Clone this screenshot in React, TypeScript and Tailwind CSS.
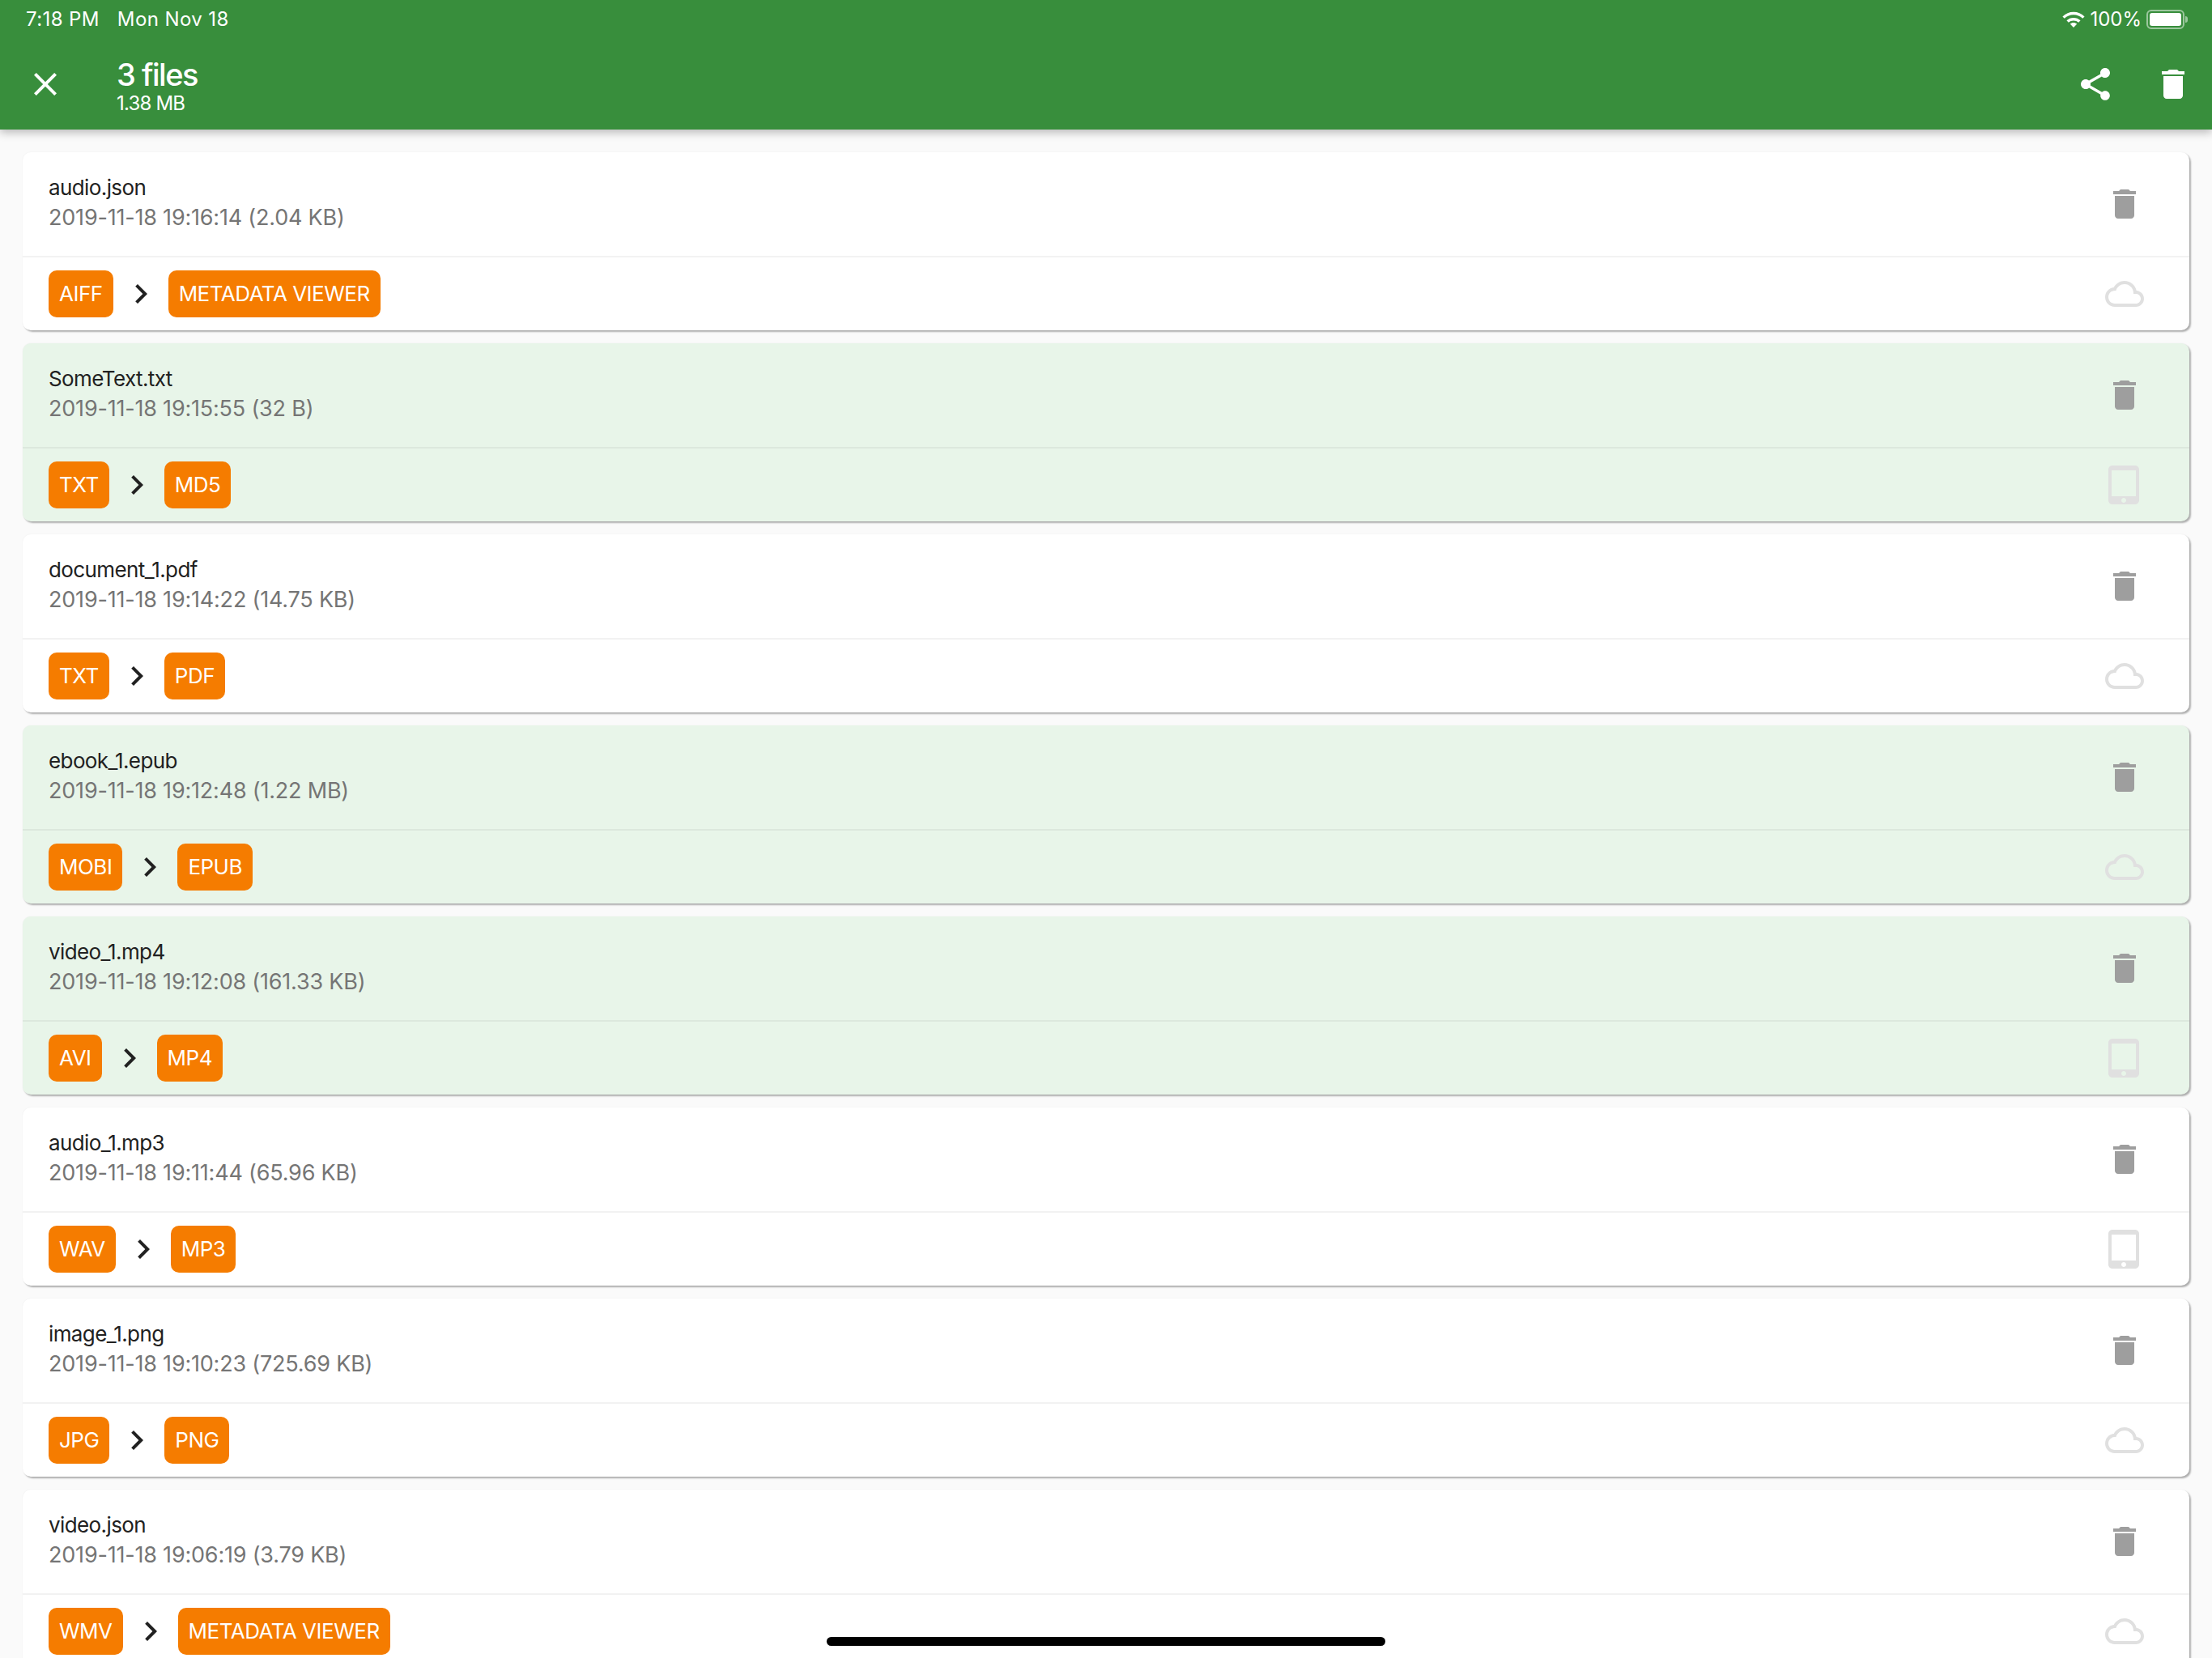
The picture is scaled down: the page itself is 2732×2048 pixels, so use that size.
const font = { fontFamily: 'Inter, "Noto Sans", sans-serif' };

const P = {
  trash: "M6 19c0 1.1.9 2 2 2h8c1.1 0 2-.9 2-2V7H6v12zM19 4h-3.5l-1-1h-5l-1 1H5v2h14V4z",
  share: "M18 16.08c-.76 0-1.44.3-1.96.77L8.91 12.7c.05-.23.09-.46.09-.7s-.04-.47-.09-.7l7.05-4.11c.54.5 1.25.81 2.04.81 1.66 0 3-1.34 3-3s-1.34-3-3-3-3 1.34-3 3c0 .24.04.47.09.7L8.04 9.81C7.5 9.31 6.79 9 6 9c-1.66 0-3 1.34-3 3s1.34 3 3 3c.79 0 1.5-.31 2.04-.81l7.12 4.16c-.05.21-.08.43-.08.65 0 1.61 1.31 2.92 2.92 2.92 1.61 0 2.92-1.31 2.92-2.92s-1.31-2.92-2.92-2.92z",
  close: "M19 6.41L17.59 5 12 10.59 6.41 5 5 6.41 10.59 12 5 17.59 6.41 19 12 13.41 17.59 19 19 17.59 13.41 12z",
  chevron: "M8.59 16.59L13.17 12 8.59 7.41 10 6l6 6-6 6-1.41-1.41z",
  cloud: "M19.35 10.04C18.67 6.59 15.64 4 12 4 9.11 4 6.6 5.64 5.35 8.04 2.34 8.36 0 10.91 0 14c0 3.31 2.69 6 6 6h13c2.76 0 5-2.24 5-5 0-2.64-2.05-4.78-4.65-4.96zM19 18H6c-2.21 0-4-1.79-4-4s1.79-4 4-4h.71C7.37 7.69 9.48 6 12 6c3.04 0 5.5 2.46 5.5 5.5v.5H19c1.66 0 3 1.34 3 3s-1.34 3-3 3z",
  tablet: "M18.5 0h-14C3.12 0 2 1.12 2 2.5v19C2 22.88 3.12 24 4.5 24h14c1.38 0 2.5-1.12 2.5-2.5v-19C21 1.12 19.88 0 18.5 0zm-7 23c-.83 0-1.5-.67-1.5-1.5s.67-1.5 1.5-1.5 1.5.67 1.5 1.5-.67 1.5-1.5 1.5zm7.5-4H4V3h15v16z",
};

function Icon({ d, className }: { d: string; className?: string }) {
  return (
    <svg viewBox="0 0 24 24" className={className} fill="currentColor">
      <path d={d} />
    </svg>
  );
}

const rows = [
  { name: "audio.json", meta: "2019-11-18 19:16:14 (2.04 KB)", from: "AIFF", to: "METADATA VIEWER", icon: P.cloud, green: false },
  { name: "SomeText.txt", meta: "2019-11-18 19:15:55 (32 B)", from: "TXT", to: "MD5", icon: P.tablet, green: true },
  { name: "document_1.pdf", meta: "2019-11-18 19:14:22 (14.75 KB)", from: "TXT", to: "PDF", icon: P.cloud, green: false },
  { name: "ebook_1.epub", meta: "2019-11-18 19:12:48 (1.22 MB)", from: "MOBI", to: "EPUB", icon: P.cloud, green: true },
  { name: "video_1.mp4", meta: "2019-11-18 19:12:08 (161.33 KB)", from: "AVI", to: "MP4", icon: P.tablet, green: true },
  { name: "audio_1.mp3", meta: "2019-11-18 19:11:44 (65.96 KB)", from: "WAV", to: "MP3", icon: P.tablet, green: false },
  { name: "image_1.png", meta: "2019-11-18 19:10:23 (725.69 KB)", from: "JPG", to: "PNG", icon: P.cloud, green: false },
  { name: "video.json", meta: "2019-11-18 19:06:19 (3.79 KB)", from: "WMV", to: "METADATA VIEWER", icon: P.cloud, green: false },
];

function Pill({ text }: { text: string }) {
  return (
    <span className="flex h-[58px] items-center rounded-[10px] bg-[#f57c00] px-[13px] pb-[2px] text-[26px] tracking-[-0.5px] text-white">
      {text}
    </span>
  );
}

export default function App() {
  return (
    <div className="relative h-[2048px] w-[2732px] overflow-hidden bg-[#fafafa]" style={font}>
      <header className="relative z-10 h-[160px] bg-[#388e3c] text-white shadow-[0_4px_10px_rgba(0,0,0,0.25)]">
        <div className="flex h-[48px] items-center justify-between pl-8 pr-[30px] text-[24px]">
          <div className="flex gap-[22px] tracking-[0.4px]">
            <span>7:18 PM</span>
            <span>Mon Nov 18</span>
          </div>
          <div className="flex items-center gap-[6px]">
            <svg viewBox="0 0 28 20" className="h-[20px] w-[28px]" fill="none" stroke="white" strokeWidth="3.4">
              <path d="M1.6 7.6C8.600 0.800 19.400 0.800 26.400 7.600" />
              <path d="M6.600 12.600C10.700 8.700 17.300 8.700 21.400 12.600" />
              <path d="M14 20l-4.300-4.400C12.100 13.400 15.900 13.400 18.300 15.600z" fill="white" stroke="none" />
            </svg>
            <span>100%</span>
            <div className="flex items-center gap-[1px]">
              <div className="flex h-[24px] w-[47px] items-center rounded-[6px] border-2 border-white/50 p-[2px]">
                <div className="h-full w-full rounded-[3px] bg-white" />
              </div>
              <div className="h-[8px] w-[3px] rounded-r-full bg-white/50" />
            </div>
          </div>
        </div>
        <div className="flex h-[112px] items-center pl-8 pr-6">
          <Icon d={P.close} className="h-[48px] w-[48px]" />
          <div className="ml-[64px] flex flex-col pt-[3px]">
            <span className="text-[38px] leading-[44px] font-medium tracking-[-1.5px]">3 files</span>
            <span className="text-[24px] leading-[28px] tracking-[-0.8px]">1.38 MB</span>
          </div>
          <div className="ml-auto flex gap-[48px]">
            <Icon d={P.share} className="h-[48px] w-[48px]" />
            <Icon d={P.trash} className="h-[48px] w-[48px]" />
          </div>
        </div>
      </header>
      <main className="flex flex-col gap-4 px-7 pt-7">
        {rows.map((r) => (
          <section
            key={r.name}
            className={`h-[220px] shrink-0 rounded-[10px] shadow-[2px_2px_2px_rgba(0,0,0,0.3),0_0_2px_rgba(0,0,0,0.06)] ${r.green ? "bg-[#e8f5e9]" : "bg-white"}`}
          >
            <div className="flex h-[130px] items-center justify-between border-b-2 border-black/5 pr-[56px] pl-8">
              <div className="-mt-[3px] flex flex-col">
                <span className="text-[26px] leading-[37px] tracking-[-0.6px] text-[#212121]">{r.name}</span>
                <span className="text-[27px] leading-[38px] tracking-[-0.2px] text-[#757575]">{r.meta}</span>
              </div>
              <Icon d={P.trash} className="h-[48px] w-[48px] text-[#9e9e9e]" />
            </div>
            <div className="flex h-[90px] items-center pr-[56px] pl-8">
              <Pill text={r.from} />
              <Icon d={P.chevron} className="mx-[10px] h-[48px] w-[48px] text-[#212121]" />
              <Pill text={r.to} />
              <Icon d={r.icon} className="ml-auto h-[48px] w-[48px] text-[#e0e0e0]" />
            </div>
          </section>
        ))}
      </main>
      <div className="absolute top-[2022px] left-[1021px] h-[11px] w-[690px] rounded-full bg-black" />
    </div>
  );
}
